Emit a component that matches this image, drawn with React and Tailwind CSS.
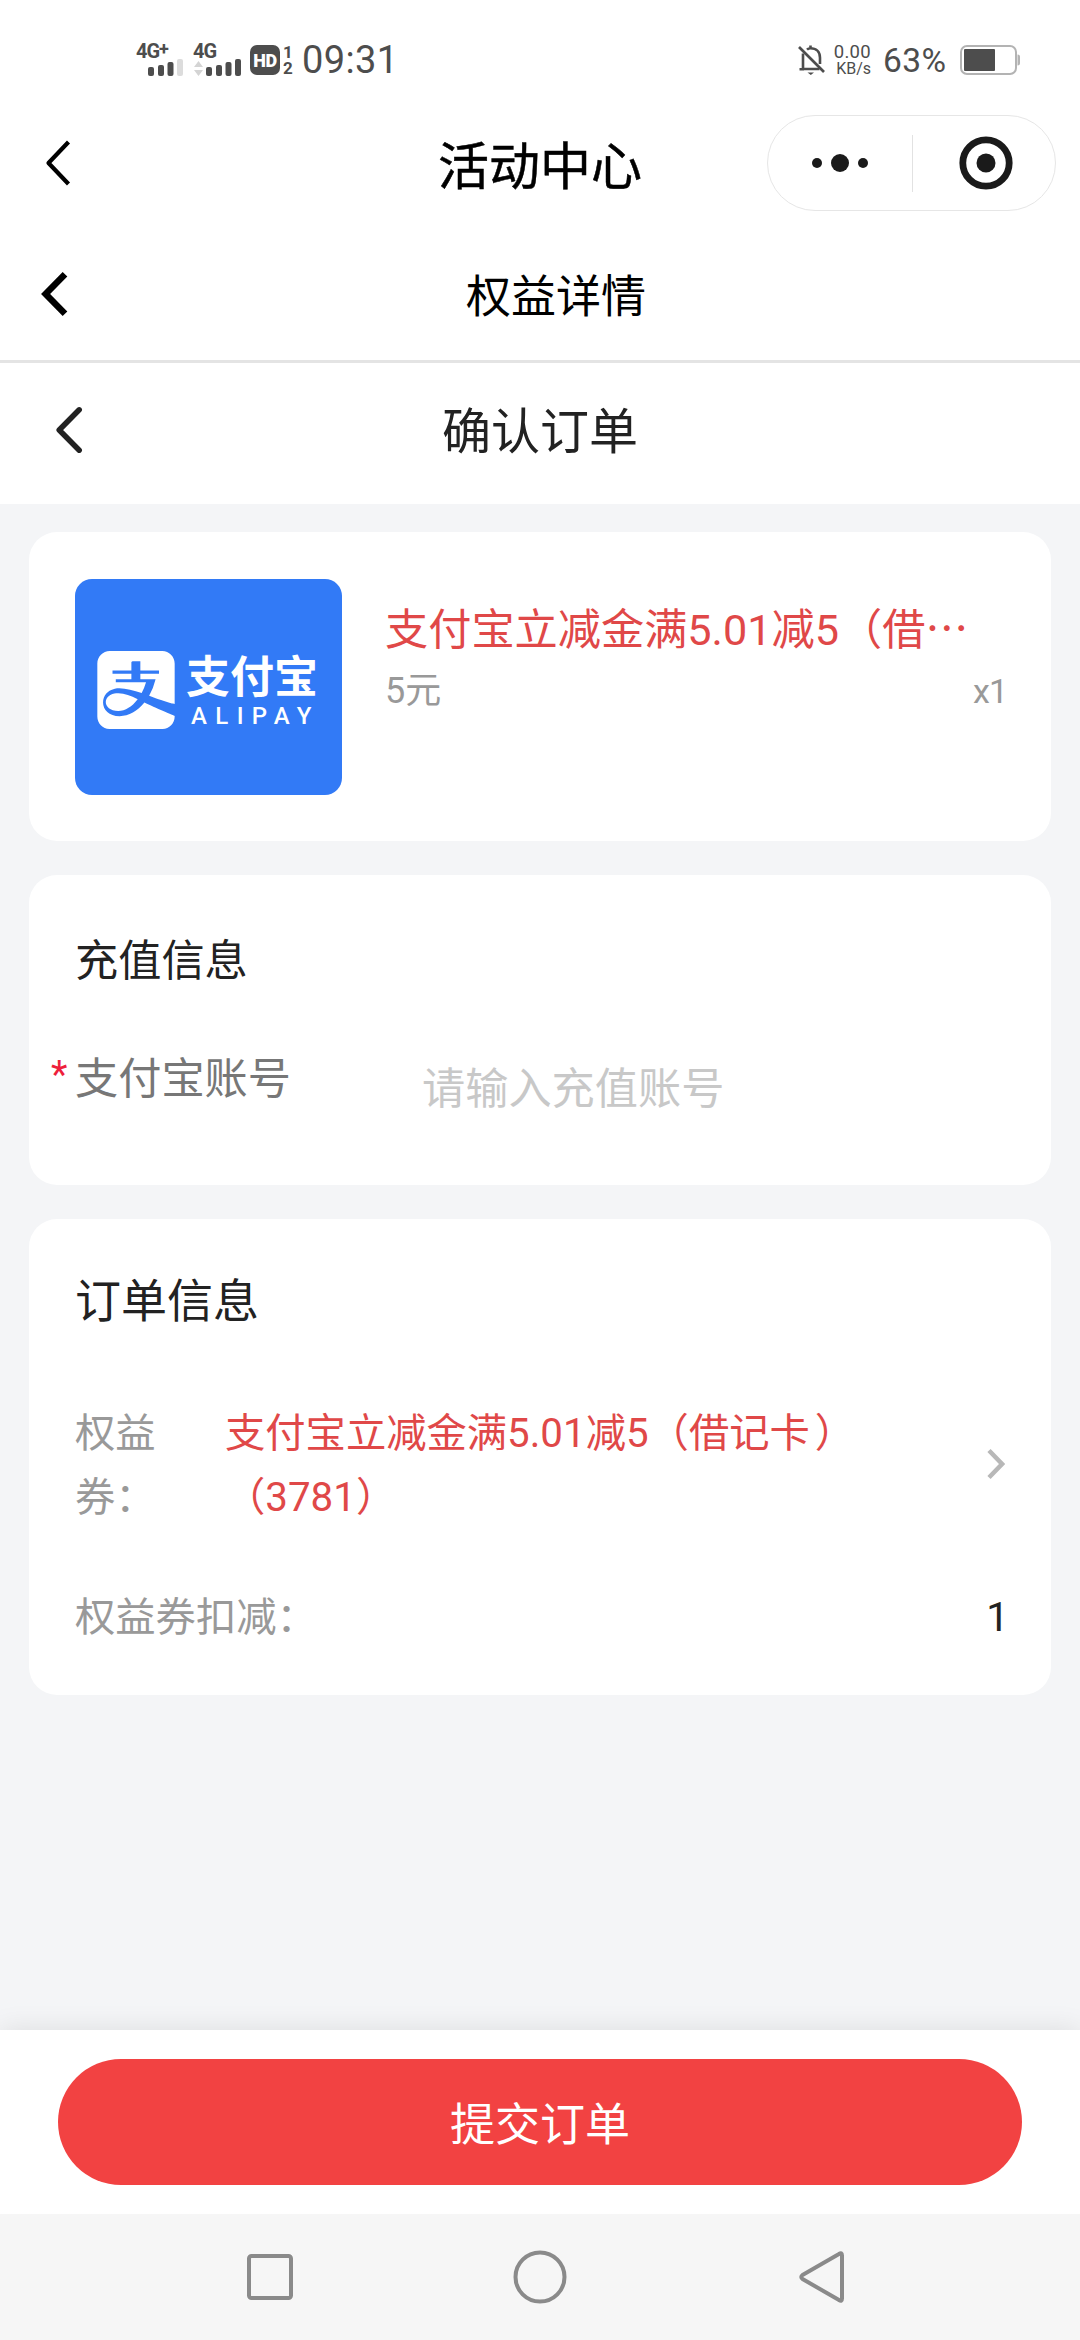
import React, { useState } from "react";
import { SiAlipay } from "react-icons/si";

// Signal bars, optionally with the last one faded
const SignalBars = ({ weak }) => (
    <svg width="36" height="17" viewBox="0 0 36 17" fill="#4d4d4d">
        <rect x="0" y="8" width="6" height="9" rx="2" />
        <rect x="10" y="6" width="6" height="11" rx="2" />
        <rect x="19.5" y="3" width="6" height="14" rx="2" />
        <rect x="29" y="0" width="6" height="17" rx="2" fill={weak ? "#dcdcdc" : "#4d4d4d"} />
    </svg>
);

const StatusBar = () => {
    return (
        <div className="h-[98px] pt-[22px] pl-[136px] pr-[60px] flex justify-between items-center text-[#4d4d4d]">
            <div className="flex items-center">
                <div className="w-[57px] h-[32px] flex flex-col">
                    <div className="h-[15px] flex text-[20px] leading-[15px] font-bold tracking-[-1px]">
                        4G<span className="text-[18px] leading-[9px]">+</span>
                    </div>
                    <div className="pl-[12px]"><SignalBars weak /></div>
                </div>
                <div className="w-[57px] h-[32px] flex flex-col">
                    <div className="h-[15px] text-[20px] leading-[15px] font-bold tracking-[-1px]">4G</div>
                    <div className="flex items-end gap-[3px] pl-[1px]">
                        <svg width="9" height="15" viewBox="0 0 9 15" fill="#d4d4d4">
                            <path d="M4.5 0L9 6H0zM4.5 15L9 9H0z" />
                        </svg>
                        <SignalBars />
                    </div>
                </div>
                <div className="w-[30px] h-[30px] rounded-[7px] bg-[#4d4d4d] text-white text-[18px] leading-[31px] font-black tracking-[-0.5px] text-center">
                    HD
                </div>
                <div className="w-[22px] pl-[2px] flex flex-col items-center pr-[8px] text-[17px] leading-[16px] font-bold">
                    <span>1</span>
                    <span>2</span>
                </div>
                <div className="text-[38px] leading-[44px] tracking-[0.4px]">09:31</div>
            </div>
            <div className="flex items-center">
                <svg width="28" height="30" viewBox="0 0 28 30" fill="none" stroke="#4d4d4d" strokeWidth="2.6">
                    <path d="M1 2L26 27" />
                    <path d="M5 8.5V24H21.5M1.5 24.2H6M9 4.6C10 3.6 11 3.2 12.5 3.2c5.500 0 9.500 3.500 9.500 9.500V19M12.500 0.500V4" />
                    <path d="M9.500 27.500h6.500l-3.200 2.500z" fill="#4d4d4d" stroke="none" />
                </svg>
                <div className="w-[45px] mr-[12px] flex flex-col items-end text-right">
                    <span className="text-[18.500px] leading-[17px] tracking-[0.3px]">0.00</span>
                    <span className="text-[16px] leading-[15px]">KB/s</span>
                </div>
                <div className="w-[77px] pt-[2px] text-[33.500px] leading-[42px] tracking-[0.4px]">63%</div>
                <svg width="60" height="30" viewBox="0 0 60 30">
                    <rect x="1" y="1" width="55" height="28" rx="6" fill="none" stroke="#b3b3b3" strokeWidth="2" />
                    <rect x="4" y="4" width="31" height="22" rx="1" fill="#4d4d4d" />
                    <path d="M57.500 9.500c2 0 2.500 1 2.500 2.500v6c0 1.500-.5 2.500-2.500 2.500z" fill="#b3b3b3" />
                </svg>
            </div>
        </div>
    );
};

const Capsule = () => (
    <div className="w-[289px] h-[96px] mr-[24px] justify-self-end rounded-full border border-[#e6e6e6] flex items-center">
        <div className="w-[144px] flex justify-center">
            <svg width="60" height="20" viewBox="0 0 60 20" fill="#1a1a1a">
                <circle cx="7" cy="10" r="5" />
                <circle cx="30" cy="10" r="9" />
                <circle cx="53" cy="10" r="5" />
            </svg>
        </div>
        <div className="w-px h-[57px] bg-[#e2e2e2]"></div>
        <div className="flex-1 flex justify-center pl-[4px]">
            <svg width="54" height="54" viewBox="0 0 54 54">
                <circle cx="27" cy="27" r="23.200" fill="none" stroke="#1a1a1a" strokeWidth="6.800" />
                <circle cx="27" cy="27" r="9.500" fill="#1a1a1a" />
            </svg>
        </div>
    </div>
);

const Headers = () => {
    return (
        <div className="bg-white">
            <div className="h-[130px] grid grid-cols-[1fr_auto_1fr] items-center">
                <svg className="ml-[44px]" width="28" height="48" viewBox="0 0 28 48" fill="none" stroke="#000" strokeWidth="4.200" strokeLinejoin="round">
                    <path d="M24.500 3L4.500 24L24.500 45" />
                </svg>
                <h1 className="pt-[9px] text-[51px] leading-[70px] text-black [-webkit-text-stroke:0.5px_#000]">活动中心</h1>
                <Capsule />
            </div>
            <div className="h-[135px] border-b-[3px] border-[#e4e4e4] grid grid-cols-[1fr_auto_1fr] items-center">
                <svg className="ml-[40px]" width="30" height="48" viewBox="0 0 30 48" fill="none" stroke="#000" strokeWidth="6.500">
                    <path d="M25 4.200L5.600 24L25 43.800" />
                </svg>
                <h2 className="pt-[8px] pl-[32px] text-[45px] leading-[64px] text-black">权益详情</h2>
            </div>
            <div className="h-[141px] pb-[7px] grid grid-cols-[1fr_auto_1fr] items-center">
                <svg className="ml-[54px]" width="30" height="50" viewBox="0 0 30 50" fill="none" stroke="#222" strokeWidth="5.500" strokeLinecap="round" strokeLinejoin="round">
                    <path d="M25.200 4.800L5.200 25L25.200 45.200" />
                </svg>
                <h2 className="pt-[5px] text-[49px] leading-[66px] text-[#222]">确认订单</h2>
            </div>
        </div>
    );
};

const ProductCard = () => {
    return (
        <div className="h-[309px] rounded-[28px] bg-white flex pt-[47px] pl-[46px] pr-[46px]">
            <div className="w-[267px] h-[216px] shrink-0 rounded-[17px] bg-[#327af6] text-white flex items-center gap-[11px] pt-[6px] pl-[22px]">
                <SiAlipay size={78} />
                <div className="flex flex-col whitespace-nowrap">
                    <div className="text-[44px] leading-[52px] font-bold">支付宝</div>
                    <div className="pl-[5px] text-[24px] leading-[24px] font-medium tracking-[8.400px]">ALIPAY</div>
                </div>
            </div>
            <div className="flex-1 pl-[43px] pt-[17px]">
                <div className="text-[43.200px] leading-[60px] text-[#e04848] whitespace-nowrap">
                    支付宝立减金满5.01减5（借<span className="font-['Noto_Sans_CJK_SC',sans-serif]">…</span>
                </div>
                <div className="mr-[-2px] flex justify-between text-[36px] leading-[60px] text-[#999]">
                    <span>5元</span>
                    <span className="text-[34px] tracking-[-1px]">x1</span>
                </div>
            </div>
        </div>
    );
};

const RechargeCard = ({ account, setAccount }) => {
    return (
        <div className="h-[310px] rounded-[28px] bg-white pt-[55px] pl-[22px]">
            <div className="pl-[24px] text-[43.200px] leading-[64px] text-[#222]">充值信息</div>
            <div className="mt-[54px] flex items-start">
                <span className="mt-[-5px] w-[24px] text-[38px] leading-[64px] text-[#ee1f3c]">*</span>
                <label className="w-[347px] text-[43.200px] leading-[64px] text-[#777]">支付宝账号</label>
                <input
                    value={account}
                    onChange={(e) => setAccount(e.target.value)}
                    placeholder="请输入充值账号"
                    className="mt-[10px] w-[560px] h-[64px] text-[43.200px] leading-[64px] text-[#222] outline-none placeholder:text-[#c8c8c8]"
                />
            </div>
        </div>
    );
};

const OrderCard = () => {
    return (
        <div className="h-[476px] rounded-[28px] bg-white pt-[50px] pl-[46px] pr-[46px]">
            <div className="text-[46px] leading-[64px] text-[#222]">订单信息</div>
            <div className="mt-[69px] flex items-center text-[40.300px] leading-[64px]">
                <div className="w-[84px] text-[#999]">权益券：</div>
                <div className="ml-[66px] w-[640px] text-[#e04848]">
                    支付宝立减金满5.01减5（借记卡<span className="ml-[5px]">）</span><br />（3781）
                </div>
                <svg className="ml-auto mb-[4px]" width="19" height="32" viewBox="0 0 19 32" fill="none" stroke="#b8b8b8" strokeWidth="4.500">
                    <path d="M3 2.500L16 16L3 29.500" />
                </svg>
            </div>
            <div className="mt-[56px] mr-[-4px] flex justify-between text-[40.300px] leading-[64px]">
                <span className="text-[#999]">权益券扣减：</span>
                <span className="text-[#222]">1</span>
            </div>
        </div>
    );
};

const NavBar = () => (
    <div className="h-[126px] bg-[#f6f6f6] flex">
        <svg width="1080" height="126" viewBox="0 0 1080 126" fill="none" stroke="#8a8a8a" strokeWidth="4" strokeLinejoin="round">
            <rect x="249" y="42" width="42" height="42" rx="2.500" />
            <circle cx="540" cy="63" r="24.500" />
            <path d="M842 41.500Q842 38 839 40L802.500 61Q800 63 802.500 65L839 86Q842 88 842 84.500z" />
        </svg>
    </div>
);

const App = () => {
    const [account, setAccount] = useState("");

    return (
        <div className="w-[1080px] h-[2340px] flex flex-col overflow-hidden bg-white font-[Roboto,'Noto_Sans_CJK_SC',sans-serif]">
            <StatusBar />
            <Headers />
            <div className="flex-1 bg-[#f4f5f7] px-[29px] pt-[28px] flex flex-col gap-[34px]">
                <ProductCard />
                <RechargeCard account={account} setAccount={setAccount} />
                <OrderCard />
            </div>
            {/* Submit */}
            <div className="relative h-[184px] bg-white px-[58px] pt-[29px] shadow-[0_0_26px_rgba(0,0,0,0.1)]">
                <button className="w-full h-[126px] pt-[8px] rounded-full bg-[#f24242] text-white text-[45px] leading-[118px]">
                    提交订单
                </button>
            </div>
            <div className="relative">
                <NavBar />
            </div>
        </div>
    );
};

export default App;
